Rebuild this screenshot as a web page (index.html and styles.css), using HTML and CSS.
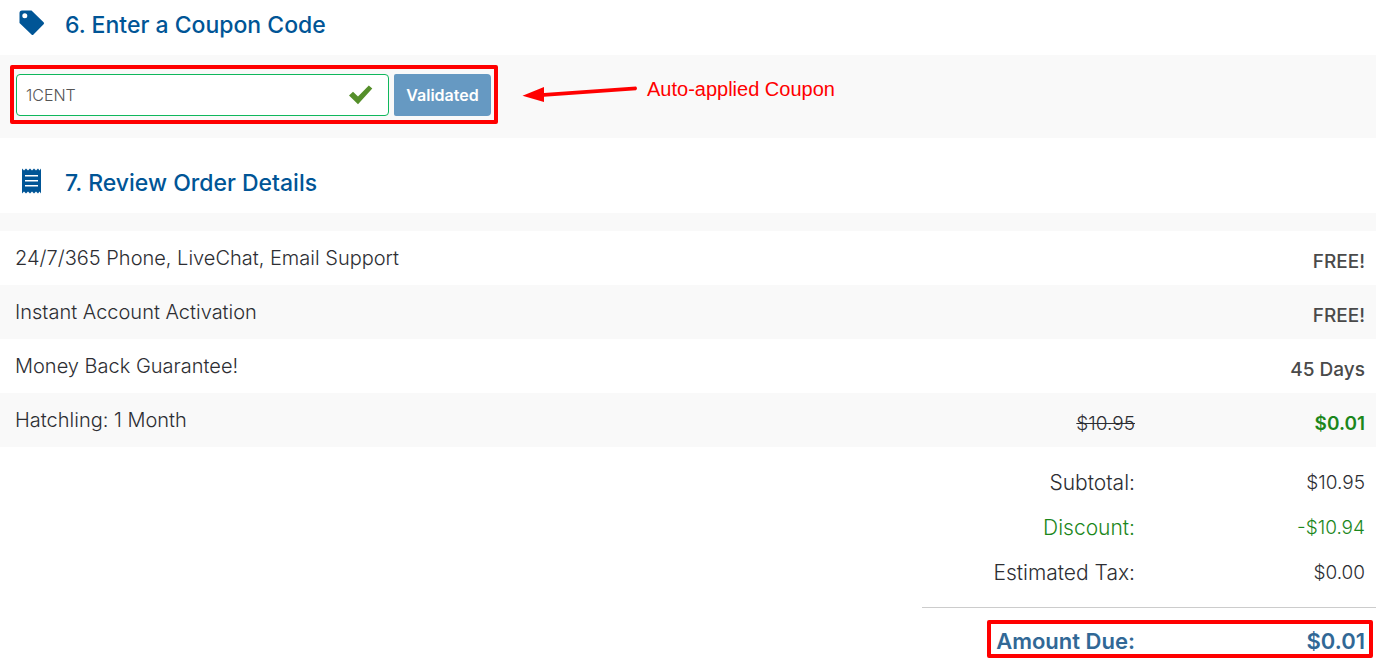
FILE: index.html
```html
<!DOCTYPE html>
<html lang="en">
<head>
    <meta charset="UTF-8">
    <meta name="viewport" content="width=device-width, initial-scale=1.0">
    <title>Review Order</title>
    <link rel="stylesheet" href="styles.css">
</head>
<body>
    <div class="heading">
        <svg class="icon" viewBox="0 0 26 26" width="26" height="26" aria-hidden="true">
            <path fill-rule="evenodd" d="M3 0.500H12.500L24.600 12.200Q25.600 13.200 24.600 14.200L14.500 24.600Q13.500 25.600 12.500 24.600L0.500 13V3Q0.500 0.500 3 0.500ZM5.800 3.200A2.500 2.500 0 1 0 5.800 8.200A2.500 2.500 0 1 0 5.800 3.200Z"/>
        </svg>
        <h2>6. Enter a Coupon Code</h2>
    </div>

    <div class="coupon">
        <form class="coupon-form">
            <div class="field">
                <input class="code" type="text" value="1CENT" aria-label="Coupon code">
                <svg class="check" viewBox="0 0 24 20" width="24" height="20" aria-hidden="true">
                    <path d="M0 10.500L4 6.800L9 11.500L19.800 0.500L23.300 3.600L9 19.200Z"/>
                </svg>
            </div>
            <button class="validate" type="button">Validated</button>
        </form>
        <div class="note">
            <svg class="arrow" viewBox="0 0 116 18" width="116" height="18" aria-hidden="true">
                <path d="M0.500 10.800L22 2V7.900L114 1.500Q116 3.300 114 5.300L22 11.700V17Z"/>
            </svg>
            <span>Auto-applied Coupon</span>
        </div>
    </div>

    <div class="heading heading-review">
        <svg class="icon" viewBox="0 0 26 26" width="26" height="26" aria-hidden="true">
            <path fill-rule="evenodd" d="M3 0.500L5 2.500L7 0.500L9 2.500L11 0.500L13 2.500L15 0.500L17 2.500L19 0.500L20.500 2.500L22 0.500V25.500L20.500 23.500L19 25.500L17 23.500L15 25.500L13 23.500L11 25.500L9 23.500L7 25.500L5 23.500L3 25.500ZM6 7V8.500H19V7ZM6 12V13.500H19V12ZM6 17V18.500H19V17Z"/>
        </svg>
        <h2>7. Review Order Details</h2>
    </div>

    <div class="order">
        <table class="items">
            <tr>
                <td class="name">24/7/365 Phone, LiveChat, Email Support</td>
                <td class="old"></td>
                <td class="value">FREE!</td>
            </tr>
            <tr>
                <td class="name">Instant Account Activation</td>
                <td class="old"></td>
                <td class="value">FREE!</td>
            </tr>
            <tr>
                <td class="name">Money Back Guarantee!</td>
                <td class="old"></td>
                <td class="value">45 Days</td>
            </tr>
            <tr>
                <td class="name">Hatchling: 1 Month</td>
                <td class="old"><s>$10.95</s></td>
                <td class="value price">$0.01</td>
            </tr>
        </table>
    </div>

    <div class="totals">
        <table class="sums">
            <tr>
                <th>Subtotal:</th>
                <td>$10.95</td>
            </tr>
            <tr class="discount">
                <th>Discount:</th>
                <td>-$10.94</td>
            </tr>
            <tr>
                <th>Estimated Tax:</th>
                <td>$0.00</td>
            </tr>
        </table>
        <div class="due">
            <span>Amount Due:</span>
            <span class="amount">$0.01</span>
        </div>
    </div>
</body>
</html>
```

FILE: styles.css
```css
* {
    box-sizing: border-box;
}

body {
    margin: 0;
    background-color: #fff;
    color: #2d2e33;
    font-family: Inter, "Liberation Sans", sans-serif;
    font-size: 20px;
    font-weight: 300;
}

.heading {
    display: flex;
    align-items: center;
    gap: 20px;
    height: 55px;
    padding: 0 19px 6px;
    color: #005596;
}

.heading-review {
    height: 75px;
    padding-top: 20px;
}

.icon {
    fill: #005596;
    margin-bottom: 4px;
}

h2 {
    margin: 0;
    font-size: 23px;
    font-weight: 500;
}

.coupon {
    display: flex;
    align-items: flex-start;
    gap: 24px;
    padding: 10px 10px 14px;
    background-color: #f9f9f9;
}

.coupon-form {
    display: flex;
    gap: 5px;
    padding: 5px 3px 4px 2px;
    border: 4px solid #f00;
    border-radius: 2px;
}

.field {
    position: relative;
}

.code {
    display: block;
    width: 373px;
    height: 42px;
    padding: 0 50px 0 9px;
    border: 1px solid #0fb75c;
    border-radius: 4px;
    background-color: #fff;
    color: #555;
    font: 300 16px Inter, "Liberation Sans", sans-serif;
}

/* sits inside the right end of the text box */
.check {
    position: absolute;
    top: 11px;
    right: 16px;
    fill: #558f2a;
}

.validate {
    width: 97px;
    height: 42px;
    padding: 0;
    border: none;
    border-radius: 2px 4px 4px 2px;
    background-color: #6699c2;
    color: #fff;
    font: 600 16px Inter, "Liberation Sans", sans-serif;
}

.note {
    display: flex;
    align-items: flex-start;
    gap: 9px;
    padding-top: 12px;
    color: #f00;
    font: 400 20px/24px "Liberation Sans", sans-serif;
}

.arrow {
    fill: #f00;
    margin-top: 8px;
}

.order {
    padding-top: 18px;
    background-color: #f9f9f9;
}

table {
    width: 100%;
    border-collapse: collapse;
}

.items tr {
    height: 54px;
    background-color: #fff;
}

.items tr:nth-child(even) {
    background-color: #f9f9f9;
}

td, th {
    padding: 0 11px;
    text-align: right;
    font-weight: 300;
}

.items .name {
    padding: 0 15px;
    text-align: left;
}

.items .old,
.items .value {
    width: 230px;
    padding-top: 6px;
    font-size: 19px;
}

.items .value {
    color: #4a4a4a;
    font-weight: 500;
}

.items .price {
    color: #1c871c;
    font-weight: 600;
}

.totals {
    width: 33%;
    margin-left: auto;
    padding-top: 13px;
}

.sums {
    margin-bottom: 12px;
}

.sums tr {
    height: 45px;
}

.sums th {
    font-size: 21px;
}

.sums td {
    width: 230px;
    font-size: 19px;
}

.sums .discount {
    color: #1c871c;
}

.due {
    position: relative;
    display: flex;
    justify-content: flex-end;
    padding: 17px 11px 2px;
    border-top: 1px solid #ccc;
    color: #316896;
    font-size: 22px;
    line-height: 32px;
    font-weight: 600;
}

.amount {
    width: 230px;
    text-align: right;
}

/* red frame round the amount */
.due::after {
    content: "";
    position: absolute;
    top: 12px;
    right: 3px;
    bottom: 1px;
    left: 65px;
    border: 4px solid #f00;
    border-radius: 2px;
}
```
